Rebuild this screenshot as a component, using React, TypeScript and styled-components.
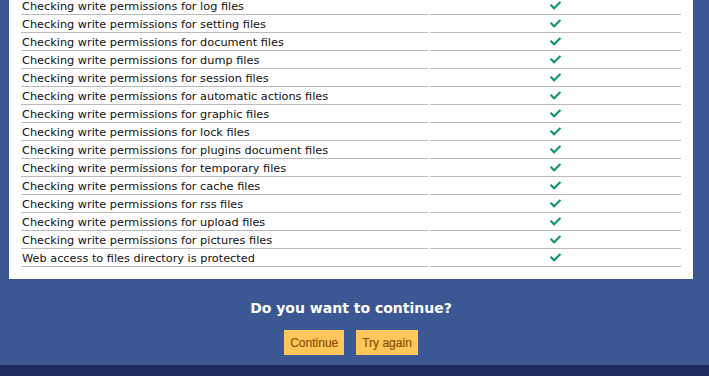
import styled, {createGlobalStyle} from "styled-components";
import {FaCheck} from "react-icons/fa";

const checks = [
    "Checking write permissions for log files",
    "Checking write permissions for setting files",
    "Checking write permissions for document files",
    "Checking write permissions for dump files",
    "Checking write permissions for session files",
    "Checking write permissions for automatic actions files",
    "Checking write permissions for graphic files",
    "Checking write permissions for lock files",
    "Checking write permissions for plugins document files",
    "Checking write permissions for temporary files",
    "Checking write permissions for cache files",
    "Checking write permissions for rss files",
    "Checking write permissions for upload files",
    "Checking write permissions for pictures files",
    "Web access to files directory is protected",
];

const App = () => {
    return (
        <>
            <GlobalStyle/>
            <Page>
                <Content>
                    <Panel>
                        <CheckTable>
                            {checks.map((label) => (
                                <Row key={label}>
                                    <LabelCell>{label}</LabelCell>
                                    <StatusCell>
                                        <FaCheck/>
                                    </StatusCell>
                                </Row>
                            ))}
                        </CheckTable>
                    </Panel>
                    <Question>Do you want to continue?</Question>
                    <Actions>
                        <ActionButton>Continue</ActionButton>
                        <ActionButton>Try again</ActionButton>
                    </Actions>
                </Content>
                <Footer/>
            </Page>
        </>
    );
};

export default App;


const GlobalStyle = createGlobalStyle`
    html, body {
        margin: 0;
        padding: 0;
        background: #3b5894;
        overflow: hidden;
    }
`;

const Page = styled.div`
    width: 709px;
    height: 376px;
    display: flex;
    flex-direction: column;
    background: #3b5894;
    font-family: "DejaVu Sans", Verdana, sans-serif;
`;

const Content = styled.div`
    margin: -3px 16px 0 9px;
`;

const Panel = styled.div`
    padding: 0 12px 12px;
    background: #fff;
`;

const CheckTable = styled.div`
    display: grid;
    grid-template-columns: 407px 251px;
    column-gap: 2px;
`;

const Row = styled.div`
    display: contents;
`;

const Cell = styled.div`
    box-sizing: border-box;
    height: 18px;
    padding-top: 2px;
    border-bottom: 1px solid #bbbbbb;
    display: flex;
    align-items: center;
    font-size: 11.3px;
    color: #111;
`;

const LabelCell = styled(Cell)`
    padding-left: 1px;
    white-space: nowrap;
`;

const StatusCell = styled(Cell)`
    justify-content: center;
    padding-top: 0;
    color: #16976a;

    svg {
        width: 11px;
        height: 11px;
    }
`;

const Question = styled.h2`
    margin: 20px 0 0;
    text-align: center;
    font-size: 14px;
    font-weight: bold;
    color: #fff;
    line-height: 18px;
`;

const Actions = styled.div`
    display: flex;
    justify-content: center;
    gap: 12px;
    margin-top: 13px;
`;

const ActionButton = styled.button`
    height: 25px;
    padding: 0 6px;
    border: none;
    background: #ffc65a;
    color: #8a5200;
    font-family: "Liberation Sans", Arial, sans-serif;
    font-size: 12px;
    -webkit-text-stroke: 0.2px #8a5200;
    cursor: pointer;
`;

const Footer = styled.div`
    margin-top: auto;
    height: 11px;
    background: #1c2c5f;
`;
